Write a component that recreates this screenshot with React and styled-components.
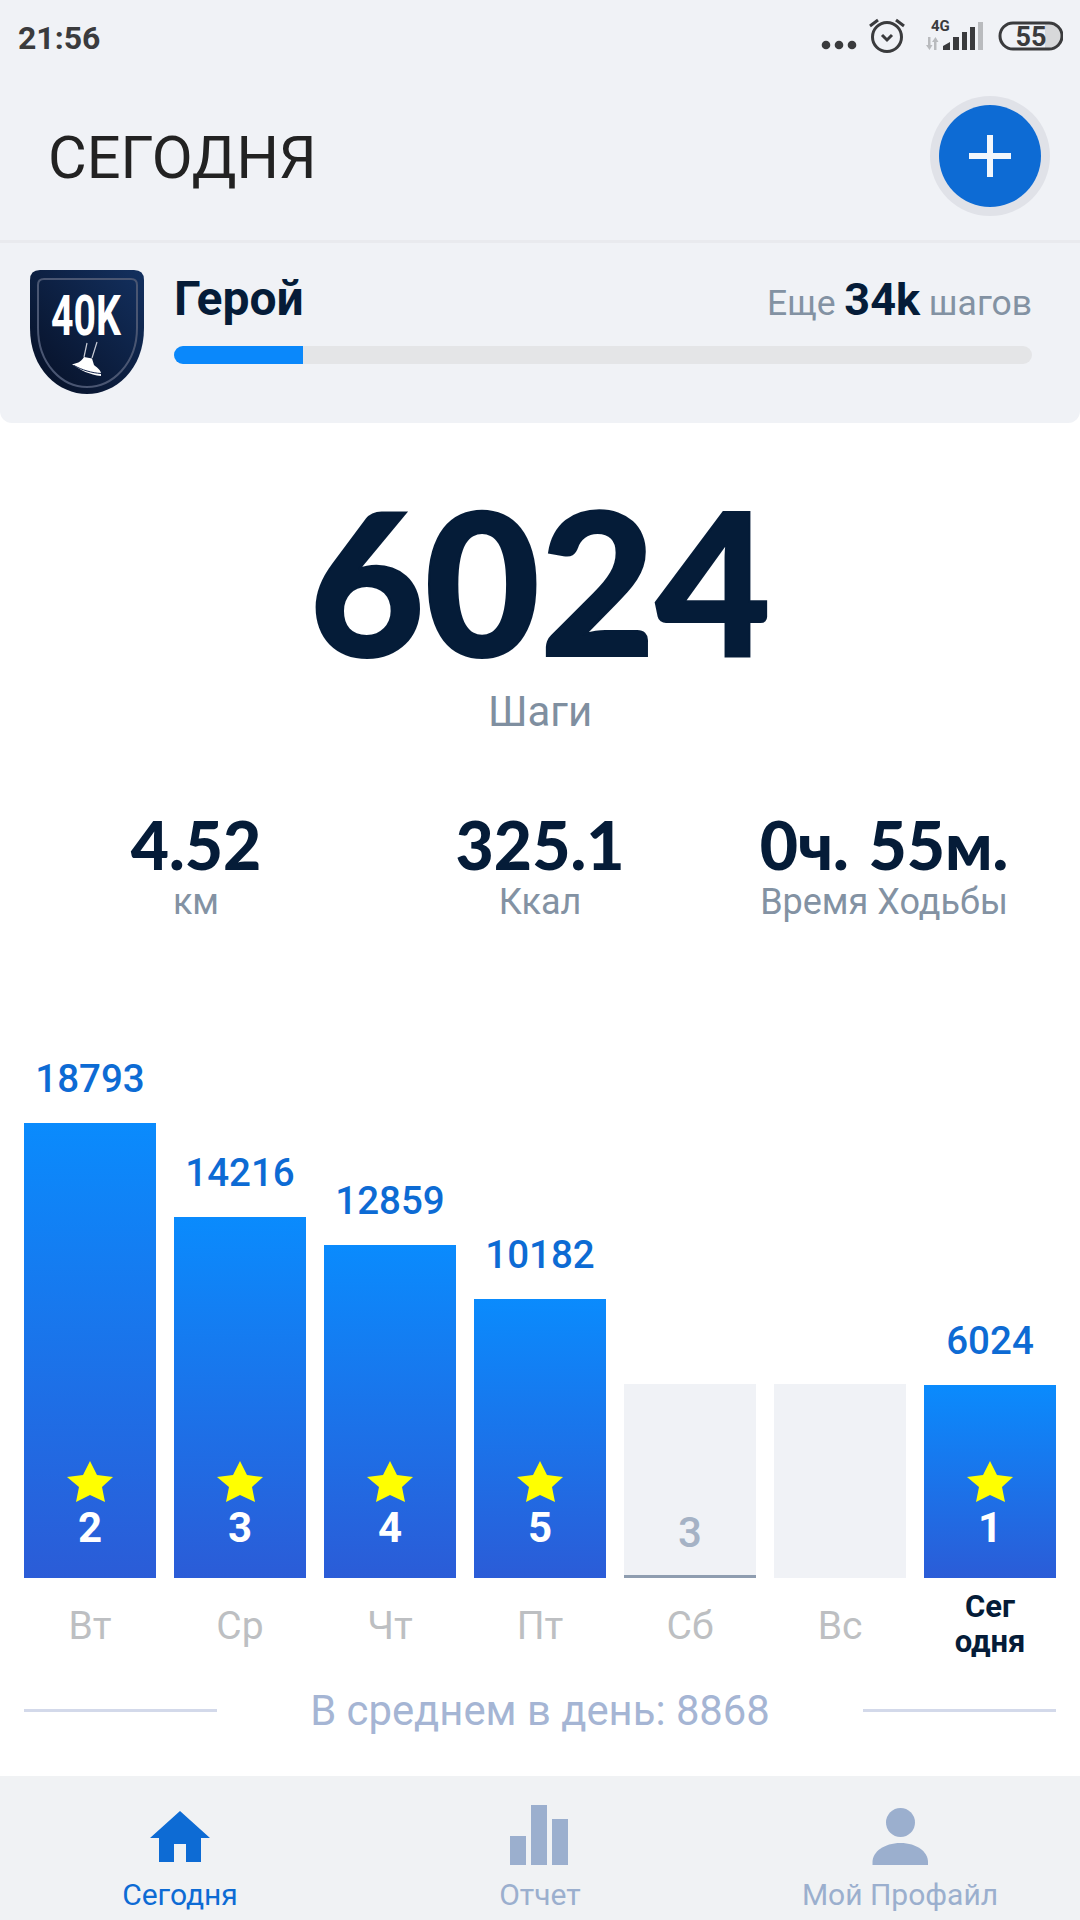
import styled, { createGlobalStyle } from 'styled-components';

const GlobalStyle = createGlobalStyle`
  html, body {
    margin: 0;
    padding: 0;
    background: #fff;
  }
  body {
    font-family: Roboto, "Noto Sans", sans-serif;
  }
`;

const Page = styled.div`
  width: 1080px;
  height: 1920px;
  overflow: hidden;
  display: flex;
  flex-direction: column;
  background: #fff;
`;

const Top = styled.div`
  background: #f0f2f6;
  border-radius: 0 0 12px 12px;
  height: 423px;
  display: flex;
  flex-direction: column;
`;

const StatusBar = styled.div`
  height: 76px;
  padding: 0 17px 0 18px;
  display: flex;
  align-items: center;
  justify-content: space-between;
`;

const Clock = styled.span`
  font-size: 32px;
  font-weight: 700;
  color: #3a3b3d;
`;

const Header = styled.header`
  height: 164px;
  box-sizing: content-box;
  padding: 0 39px 0 48px;
  display: flex;
  align-items: center;
  justify-content: space-between;
  border-bottom: 3px solid #e9eaee;
`;

const Title = styled.h1`
  margin: 0;
  font-size: 59.5px;
  font-weight: 400;
  color: #222;
`;

const AddButton = styled.button`
  width: 102px;
  height: 102px;
  margin-bottom: 4px;
  padding: 0;
  border: none;
  border-radius: 50%;
  background: #0d6bd4;
  box-shadow: 0 0 0 9px #e0e2e8;
  display: flex;
  align-items: center;
  justify-content: center;
`;

const Level = styled.section`
  display: flex;
  padding: 27px 48px 0 30px;
  gap: 30px;
`;

const LevelBody = styled.div`
  flex: 1;
  display: flex;
  flex-direction: column;
`;

const LevelRow = styled.div`
  display: flex;
  justify-content: space-between;
  align-items: baseline;
  height: 76px;
`;

const LevelName = styled.span`
  font-size: 48px;
  font-weight: 700;
  color: #051c38;
`;

const Remaining = styled.span`
  font-size: 35.5px;
  color: #8392a3;

  b {
    font-size: 45px;
    font-weight: 700;
    color: #051c38;
  }
`;

const Track = styled.div`
  height: 18px;
  border-radius: 9px;
  background: #e4e5e7;
  overflow: hidden;
`;

const TrackFill = styled.div`
  height: 100%;
  width: 129px;
  background: #0a88fb;
`;

const Hero = styled.section`
  margin-top: 51px;
  display: flex;
  flex-direction: column;
  align-items: center;
`;

const HeroValue = styled.div`
  font-family: Lato, sans-serif;
  font-size: 199px;
  font-weight: 900;
  line-height: 210px;
  color: #051c38;
  -webkit-text-stroke: 2px #051c38;
`;

const HeroLabel = styled.div`
  font-size: 42px;
  line-height: 48px;
  margin-top: 4px;
  color: #7f8fa0;
`;

const Stats = styled.section`
  margin-top: 69px;
  display: grid;
  grid-template-columns: 392px 296px 392px;
`;

const Stat = styled.div`
  display: flex;
  flex-direction: column;
  align-items: center;
`;

const StatValue = styled.div`
  font-family: Lato, sans-serif;
  font-size: 66px;
  font-weight: 900;
  line-height: 80px;
  margin-bottom: -4px;
  word-spacing: 4px;
  color: #051c38;
`;

const StatLabel = styled.div`
  font-size: 36px;
  line-height: 42px;
  color: #8392a3;
`;

const Chart = styled.section`
  margin-top: 134px;
  padding: 0 24px;
  display: grid;
  grid-template-columns: repeat(7, 132px);
  column-gap: 18px;
  align-items: end;
`;

const Column = styled.div`
  display: flex;
  flex-direction: column;
  align-items: center;
`;

const BarValue = styled.div`
  font-size: 38.5px;
  font-weight: 500;
  line-height: 44px;
  margin-bottom: 22px;
  color: #0d6bd4;
`;

const Bar = styled.div`
  width: 100%;
  height: ${(p) => p.$height}px;
  box-sizing: border-box;
  display: flex;
  flex-direction: column;
  align-items: center;
  justify-content: flex-end;
  background: ${(p) => (p.$active ? 'linear-gradient(180deg, #0a8bfd 0%, #2b5cd7 100%)' : '#f0f2f6')};
  border-bottom: ${(p) => (p.$line ? '3px solid #8f9db0' : 'none')};
`;

const BarCount = styled.div`
  font-size: 42px;
  font-weight: ${(p) => (p.$active ? 700 : 500)};
  line-height: 50px;
  margin-bottom: ${(p) => (p.$active ? 25 : 17)}px;
  color: ${(p) => (p.$active ? '#fff' : '#a5b2c5')};
`;

const Days = styled.div`
  padding: 0 24px;
  display: grid;
  grid-template-columns: repeat(7, 132px);
  column-gap: 18px;
  height: 104px;
`;

const Day = styled.div`
  display: flex;
  align-items: center;
  justify-content: center;
  text-align: center;
  height: ${(p) => (p.$today ? 92 : 96)}px;
  font-size: ${(p) => (p.$today ? 31 : 39)}px;
  font-weight: ${(p) => (p.$today ? 700 : 400)};
  line-height: 35px;
  color: ${(p) => (p.$today ? '#051c38' : '#bdbfc2')};
`;

const Average = styled.div`
  padding: 0 24px;
  display: flex;
  align-items: center;
  justify-content: space-between;
  height: 56px;
`;

const AverageLine = styled.div`
  width: 193px;
  height: 3px;
  background: #d3d9ea;
`;

const AverageText = styled.span`
  font-size: 41.8px;
  color: #a5b5d4;
`;

const Nav = styled.nav`
  margin-top: auto;
  height: 144px;
  background: #f0f2f4;
  display: grid;
  grid-template-columns: repeat(3, 360px);
`;

const NavItem = styled.div`
  display: flex;
  flex-direction: column;
  align-items: center;
  padding-top: 26px;
  font-size: 30px;
  color: ${(p) => (p.$active ? '#0d6bd4' : '#9bafce')};

  svg {
    display: block;
    margin-bottom: 11px;
  }
`;

const Star = () => (
  <svg width="46" height="41" viewBox="0 0 46 41" style={{ marginBottom: 1 }}>
    <path
      d="M23 0l7 14 16 2-11 10 3 15-15-7-14 7 3-15L0 16l16-2z"
      fill="#ffff00"
    />
  </svg>
);

const StatusIcons = () => (
  <svg width="243" height="40" viewBox="0 0 243 40">
    <g fill="#3a3b3d">
      <circle cx="6" cy="27" r="4.3" />
      <circle cx="19" cy="27" r="4.3" />
      <circle cx="32" cy="27" r="4.3" />
    </g>
    <g fill="none" stroke="#3a3b3d" strokeWidth="3">
      <circle cx="67" cy="19" r="14.5" />
      <path d="M62 17l5 5 5-5" />
      <path d="M50 8l8-6M84 8l-8-6" />
    </g>
    <text x="111" y="13" fontFamily="Roboto" fontWeight="700" fontSize="15" fill="#3a3b3d">4G</text>
    <g fill="#b9bbbe">
      <path d="M108 19h2.500v8h2l-3 5-3.500-5h2z" />
      <path d="M114 32h2.500v-8h2l-3-5-3.500 5h2z" />
      <rect x="158" y="4" width="5" height="28" />
    </g>
    <g fill="#3a3b3d">
      <path d="M123 32v-4l7-4v8z" />
      <rect x="133" y="19" width="6" height="13" />
      <rect x="142" y="14" width="5" height="18" />
      <rect x="150" y="9" width="5" height="23" />
    </g>
    <path d="M225 6h5a12 12 0 0 1 0 24h-5z" fill="#d7d8da" />
    <rect x="180" y="5" width="62" height="26" rx="13" fill="none" stroke="#3a3b3d" strokeWidth="3" />
    <text x="211" y="28" textAnchor="middle" fontFamily="Roboto" fontWeight="700" fontSize="27" fill="#3a3b3d">55</text>
  </svg>
);

const Badge = () => (
  <svg width="114" height="124" viewBox="0 0 114 124" style={{ flex: 'none' }}>
    <defs>
      <linearGradient id="shield" x1="1" y1="0" x2="0" y2="1">
        <stop offset="0" stopColor="#13305f" />
        <stop offset="1" stopColor="#060f24" />
      </linearGradient>
    </defs>
    <path
      d="M10 0H104Q114 0 114 10V58C114 100 85 124 57 124C29 124 0 100 0 58V10Q0 0 10 0Z"
      fill="url(#shield)"
    />
    <path
      d="M14 9H101Q107 9 107 15V58C107 94 82 117 57 117C32 117 8 94 8 58V15Q8 9 14 9Z"
      fill="none"
      stroke="#4a5672"
      strokeWidth="2"
    />
    <text
      transform="translate(56 65) scale(0.7 1)"
      textAnchor="middle"
      fontFamily="Roboto"
      fontWeight="700"
      fontSize="56"
      fill="#fff"
    >
      40K
    </text>
    <path d="M57 73l-3 14M67 72l-5 16" stroke="#c8ccd6" strokeWidth="1.2" fill="none" />
    <path d="M54 87L62 88.500L64 95C66 97 70 99 71 103V106C60 105 50 100 42 94C46 94 51 92 54 87Z" fill="#fff" />
    <path d="M44 95.500C52 100 62 103 71 103.500" stroke="#13244a" strokeWidth="1" fill="none" />
  </svg>
);

const stats = [
  { value: '4.52', label: 'км' },
  { value: '325.1', label: 'Ккал' },
  { value: '0ч. 55м.', label: 'Время Ходьбы' },
];

const bars = [
  { value: '18793', height: 455, count: 2 },
  { value: '14216', height: 361, count: 3 },
  { value: '12859', height: 333, count: 4 },
  { value: '10182', height: 279, count: 5 },
  { height: 194, count: 3, idle: true, line: true },
  { height: 194, idle: true },
  { value: '6024', height: 193, count: 1 },
];

const days = ['Вт', 'Ср', 'Чт', 'Пт', 'Сб', 'Вс'];

export default function App() {
  return (
    <Page>
      <GlobalStyle />
      <Top>
        <StatusBar>
          <Clock>21:56</Clock>
          <StatusIcons />
        </StatusBar>
        <Header>
          <Title>СЕГОДНЯ</Title>
          <AddButton>
            <svg width="42" height="42" viewBox="0 0 42 42">
              <path d="M18 0h6v18h18v6H24v18h-6V24H0v-6h18z" fill="#f2f7fc" />
            </svg>
          </AddButton>
        </Header>
        <Level>
          <Badge />
          <LevelBody>
            <LevelRow>
              <LevelName>Герой</LevelName>
              <Remaining>
                Еще <b>34k</b> шагов
              </Remaining>
            </LevelRow>
            <Track>
              <TrackFill />
            </Track>
          </LevelBody>
        </Level>
      </Top>

      <Hero>
        <HeroValue>6024</HeroValue>
        <HeroLabel>Шаги</HeroLabel>
      </Hero>

      <Stats>
        {stats.map((s) => (
          <Stat key={s.label}>
            <StatValue>{s.value}</StatValue>
            <StatLabel>{s.label}</StatLabel>
          </Stat>
        ))}
      </Stats>

      <Chart>
        {bars.map((b, i) => (
          <Column key={i}>
            {b.value && <BarValue>{b.value}</BarValue>}
            <Bar $height={b.height} $active={!b.idle} $line={b.line}>
              {!b.idle && <Star />}
              {b.count && <BarCount $active={!b.idle}>{b.count}</BarCount>}
            </Bar>
          </Column>
        ))}
      </Chart>

      <Days>
        {days.map((d) => (
          <Day key={d}>{d}</Day>
        ))}
        <Day $today>
          Сег
          <br />
          одня
        </Day>
      </Days>

      <Average>
        <AverageLine />
        <AverageText>В среднем в день: 8868</AverageText>
        <AverageLine />
      </Average>

      <Nav>
        <NavItem $active>
          <svg width="60" height="64" viewBox="0 0 60 64">
            <path d="M30 9L60 36H51V60H36V42H24V60H9V36H0Z" fill="#0d6bd4" />
          </svg>
          Сегодня
        </NavItem>
        <NavItem>
          <svg width="60" height="64" viewBox="0 0 60 64">
            <path d="M0 34h16v29H0zM21 3h16v60H21zM42 17h16v46H42z" fill="#9bafce" />
          </svg>
          Отчет
        </NavItem>
        <NavItem>
          <svg width="60" height="64" viewBox="0 0 60 64">
            <ellipse cx="30.500" cy="20.500" rx="14.500" ry="14.500" fill="#9bafce" />
            <path d="M2.500 63V60C2.500 50 14 41 30.500 41S58 50 58 60V63z" fill="#9bafce" />
          </svg>
          Мой Профайл
        </NavItem>
      </Nav>
    </Page>
  );
}
